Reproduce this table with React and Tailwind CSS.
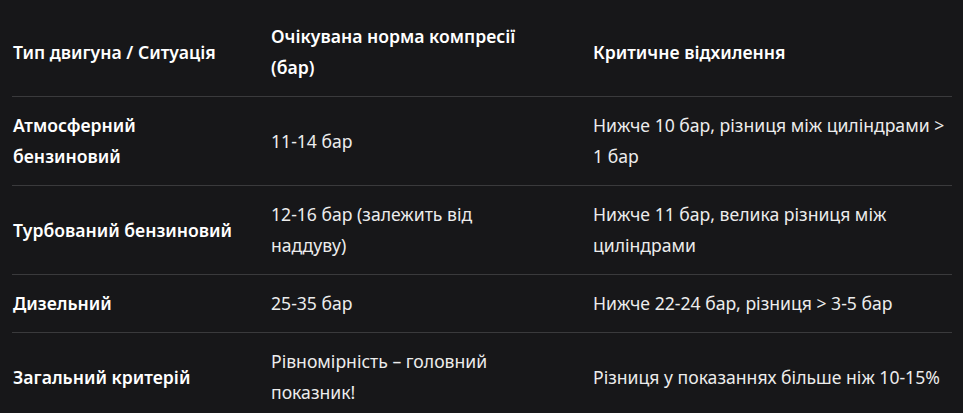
const HEAD = ['Тип двигуна / Ситуація', 'Очікувана норма компресії (бар)', 'Критичне відхилення'];

const ROWS = [
  ['Атмосферний бензиновий', '11-14 бар', 'Нижче 10 бар, різниця між циліндрами > 1 бар'],
  ['Турбований бензиновий', '12-16 бар (залежить від наддуву)', 'Нижче 11 бар, велика різниця між циліндрами'],
  ['Дизельний', '25-35 бар', 'Нижче 22-24 бар, різниця > 3-5 бар'],
  ['Загальний критерій', 'Рівномірність – головний показник!', 'Різниця у показаннях більше ніж 10-15%'],
];

const grid = "grid grid-cols-[258px_322px_1fr] border-b border-[#3a3a3c]";
const cell = "py-[13px] pl-px flex items-center";
// right padding picked so lines wrap where the table does
const pads = ['pr-8', 'pr-[60px]', 'pr-0'];

export default function App() {
  return (
    <div className="min-h-screen bg-[#171719] text-[#ececec] pt-2 pl-3 pr-[11px] font-['Noto_Sans',sans-serif] text-[17.6px] leading-[31px] overflow-hidden">
      <div className="w-[940px]">
        <div className={grid}>
          {HEAD.map((h, j) => (
            <div key={h} className={`${cell} ${pads[j]} font-semibold text-white`}>{h}</div>
          ))}
        </div>
        {ROWS.map((r, i) => (
          <div key={i} className={grid}>
            <div className={`${cell} ${pads[0]} font-semibold text-white`}>{r[0]}</div>
            <div className={`${cell} ${pads[1]}`}>{r[1]}</div>
            <div className={`${cell} ${pads[2]}`}>{r[2]}</div>
          </div>
        ))}
      </div>
    </div>
  );
}
